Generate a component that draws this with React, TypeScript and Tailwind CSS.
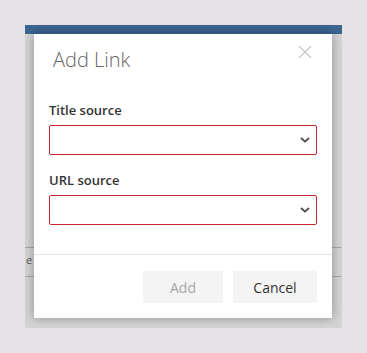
import React from 'react';

const Chevron = () => (
  <svg width="10" height="6" viewBox="0 0 10 6" className="text-[#4a4a4a]">
    <path d="M1 1l4 3.6L9 1" fill="none" stroke="currentColor" strokeWidth="1.8" />
  </svg>
);

const Field = ({ label }: { label: string }) => (
  <div className="flex flex-col">
    <label className="text-[13px] font-semibold leading-[18px] text-[#333]">{label}</label>
    <div className="mt-[6px] flex h-[30px] items-center justify-end rounded-[2px] border border-[#c8262c] bg-white pr-[6px]">
      <Chevron />
    </div>
  </div>
);

const App = () => {
  return (
    <div
      className="h-[353px] w-[367px] bg-[#e5e3e5] p-[25px]"
      style={{ fontFamily: '"Open Sans", "Noto Sans", sans-serif' }}
    >
      <div className="relative h-[303px] w-[317px] overflow-hidden bg-[#d4d4d4]">
        <div className="h-[9px] bg-[#3c6591]" />
        {/* page behind the overlay */}
        <div className="absolute left-0 right-0 top-[222px] h-px bg-[#a8a8a8]" />
        <div className="absolute left-0 right-0 top-[251px] h-px bg-[#a8a8a8]" />
        <span className="absolute left-[1px] top-[228px] text-[11px] leading-[14px] text-[#555]">e</span>

        <div className="relative ml-[9px] flex h-[284px] w-[298px] flex-col bg-white shadow-[0_0_10px_rgba(0,0,0,0.35)]">
          <div className="flex items-start justify-between pl-[19px] pr-[20px] pt-[12px]">
            <h1 className="text-[20px] font-light leading-[28px] text-[#666]">Add Link</h1>
            <svg width="14" height="14" viewBox="0 0 14 14" className="-mt-[1px] text-[#c6c6c6]">
              <path d="M1 1l12 12M13 1L1 13" stroke="currentColor" strokeWidth="1.2" />
            </svg>
          </div>

          <div className="flex flex-col gap-[16px] px-[15px] pt-[27px]">
            <Field label="Title source" />
            <Field label="URL source" />
          </div>

          <div className="mt-auto border-t border-[#e3e3e3] px-[15px] pb-[15px] pt-[16px]">
            <div className="flex justify-end gap-[10px]">
              <button className="h-[32px] w-[80px] bg-[#f4f4f4] text-[14px] text-[#a6a6a6]">Add</button>
              <button className="h-[32px] w-[84px] bg-[#f4f4f4] text-[14px] text-[#333]">Cancel</button>
            </div>
          </div>
        </div>
      </div>
    </div>
  );
};

export default App;
